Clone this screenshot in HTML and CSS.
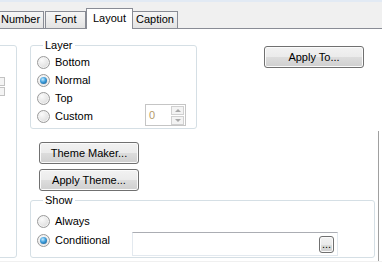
FILE: index.html
```html
<!DOCTYPE html>
<html lang="en">
<head>
    <meta charset="UTF-8">
    <title>Layout</title>
    <link rel="stylesheet" href="styles.css">
</head>
<body>

<div class="topline"></div>

<div class="tabs">
    <div class="tab first">Number</div>
    <div class="tab">Font</div>
    <div class="tab active">Layout</div>
    <div class="tab last">Caption</div>
</div>

<div class="panel">
    <!-- group that is cut off on the left -->
    <div class="side-box">
        <div class="stub"><span></span><span></span></div>
    </div>

    <div class="main">
        <div class="row-top">
            <div class="group layer">
                <span class="legend">Layer</span>
                <div class="opt"><span class="radio"></span>Bottom</div>
                <div class="opt"><span class="radio on"></span>Normal</div>
                <div class="opt"><span class="radio"></span>Top</div>
                <div class="opt"><span class="radio"></span>Custom
                    <div class="spin">
                        <span class="spin-val">0</span>
                        <div class="spin-btns">
                            <span class="up"></span>
                            <span class="down"></span>
                        </div>
                    </div>
                </div>
            </div>
            <button class="btn apply-to">Apply To...</button>
        </div>

        <button class="btn theme first-theme">Theme Maker...</button>
        <button class="btn theme">Apply Theme...</button>

        <div class="group show">
            <span class="legend">Show</span>
            <div class="opt"><span class="radio"></span>Always</div>
            <div class="opt cond">
                <span class="radio on"></span><span class="cond-label">Conditional</span>
                <div class="field"><button class="btn dots">...</button></div>
            </div>
        </div>
    </div>

    <div class="edge"></div>
</div>

</body>
</html>
```

FILE: styles.css
```css
body {
    margin: 0;
    padding: 0;
    width: 382px;
    height: 262px;
    overflow: hidden;
    background: #f0f0f0;
    font-family: 'Liberation Sans', Arial, sans-serif;
    font-size: 11px;
    color: #000;
}

.topline {
    height: 2px;
    background: #e2eaf4;
}

.tabs {
    display: flex;
    align-items: flex-end;
    height: 26px;
}

.tab {
    box-sizing: border-box;
    height: 17px;
    line-height: 15px;
    text-align: center;
    border: 1px solid #898c95;
    border-bottom: none;
    background: linear-gradient(#f6f6f6, #e3e3e3);
}

.tab.first {
    width: 47px;
    margin-left: -3px;
}

.tab:nth-child(2) {
    width: 41px;
    margin-left: 1px;
}

.tab.active {
    position: relative;
    z-index: 2;
    width: 47px;
    height: 21px;
    line-height: 18px;
    margin-bottom: -1px;
    background: #fff;
}

.tab.last {
    width: 46px;
    margin-left: -1px;
}

.panel {
    display: flex;
    height: 233px;
    padding-top: 16px;
    box-sizing: border-box;
    background: #fff;
    border-top: 1px solid #898c95;
}

.side-box {
    box-sizing: border-box;
    width: 27px;
    height: 213px;
    margin-left: -10px;
    border: 1px solid #d5dfe5;
    border-radius: 3px;
}

.stub {
    display: flex;
    flex-direction: column;
    gap: 1px;
    width: 10px;
    margin: 31px 0 0 4px;
}

.stub span {
    height: 9px;
    border: 1px solid #c2c2c2;
    box-sizing: border-box;
    background: #f4f4f4;
}

.main {
    width: 345px;
    margin-left: 13px;
}

.row-top {
    display: flex;
    align-items: flex-start;
}

.group {
    box-sizing: border-box;
    border: 1px solid #d5dfe5;
    border-radius: 3px;
    padding: 0 10px 0 6px;
}

.legend {
    display: block;
    width: fit-content;
    margin: -7px 0 0 6px;
    padding: 0 2px;
    line-height: 13px;
    background: #fff;
}

.layer {
    width: 167px;
    height: 84px;
}

.layer .legend {
    margin-bottom: 1px;
}

.opt {
    display: flex;
    align-items: center;
    height: 18px;
}

.radio {
    box-sizing: border-box;
    display: flex;
    align-items: center;
    justify-content: center;
    width: 13px;
    height: 13px;
    margin-right: 5px;
    border: 1px solid #9a9a9a;
    border-radius: 50%;
    background: radial-gradient(circle at 35% 30%, #fbfbfb, #e6e6e6 55%, #cfcfcf);
    box-shadow: inset 0 0 0 1px #f3f3f3;
}

.radio.on::after {
    content: "";
    width: 7px;
    height: 7px;
    border-radius: 50%;
    background: radial-gradient(circle at 40% 35%, #c4ebff 0%, #3d9ddb 45%, #124e80 100%);
}

.spin {
    box-sizing: border-box;
    display: flex;
    align-items: center;
    justify-content: space-between;
    width: 41px;
    height: 22px;
    margin: -3px 0 -1px auto;
    padding: 1px;
    border: 1px solid #c5c5c5;
    background: #fff;
}

.spin-val {
    margin-left: 2px;
    color: #b59a6a;
}

.spin-btns {
    display: flex;
    flex-direction: column;
    gap: 1px;
}

.spin-btns span {
    box-sizing: border-box;
    display: flex;
    align-items: center;
    justify-content: center;
    width: 13px;
    height: 9px;
    border: 1px solid #d0d0d0;
    background: #f3f3f3;
}

.spin-btns .up::after,
.spin-btns .down::after {
    content: "";
    border-left: 3px solid transparent;
    border-right: 3px solid transparent;
}

.spin-btns .up::after {
    border-bottom: 3px solid #a8a8a8;
}

.spin-btns .down::after {
    border-top: 3px solid #a8a8a8;
}

.btn {
    box-sizing: border-box;
    display: block;
    height: 22px;
    padding: 0;
    font-family: 'Liberation Sans', Arial, sans-serif;
    font-size: 11px;
    color: #000;
    border: 1px solid #707070;
    border-radius: 3px;
    background: linear-gradient(#f2f2f2 0%, #ebebeb 50%, #dddddd 50%, #cfcfcf 100%);
    box-shadow: inset 0 0 0 1px #fbfbfb;
}

.apply-to {
    width: 100px;
    margin: 1px 0 0 67px;
}

.theme {
    width: 100px;
    margin: 5px 0 0 9px;
}

.theme.first-theme {
    margin-top: 13px;
}

.show {
    width: 345px;
    height: 58px;
    margin-top: 9px;
}

.show .legend {
    margin-bottom: 5px;
}

.opt.cond {
    align-items: flex-start;
    height: 18px;
    margin-top: 1px;
}

.opt.cond .radio {
    margin-top: 3px;
}

.cond-label {
    width: 77px;
    line-height: 18px;
}

.field {
    box-sizing: border-box;
    display: flex;
    align-items: center;
    justify-content: flex-end;
    width: 206px;
    height: 24px;
    margin-top: 1px;
    padding-right: 3px;
    border: 1px solid #e3e9ef;
    border-top-color: #abadb3;
    background: #fff;
}

.dots {
    width: 15px;
    height: 17px;
    line-height: 10px;
}

.edge {
    width: 1px;
    margin: 86px 0 0 3px;
    background: #a0a0a0;
}
```
